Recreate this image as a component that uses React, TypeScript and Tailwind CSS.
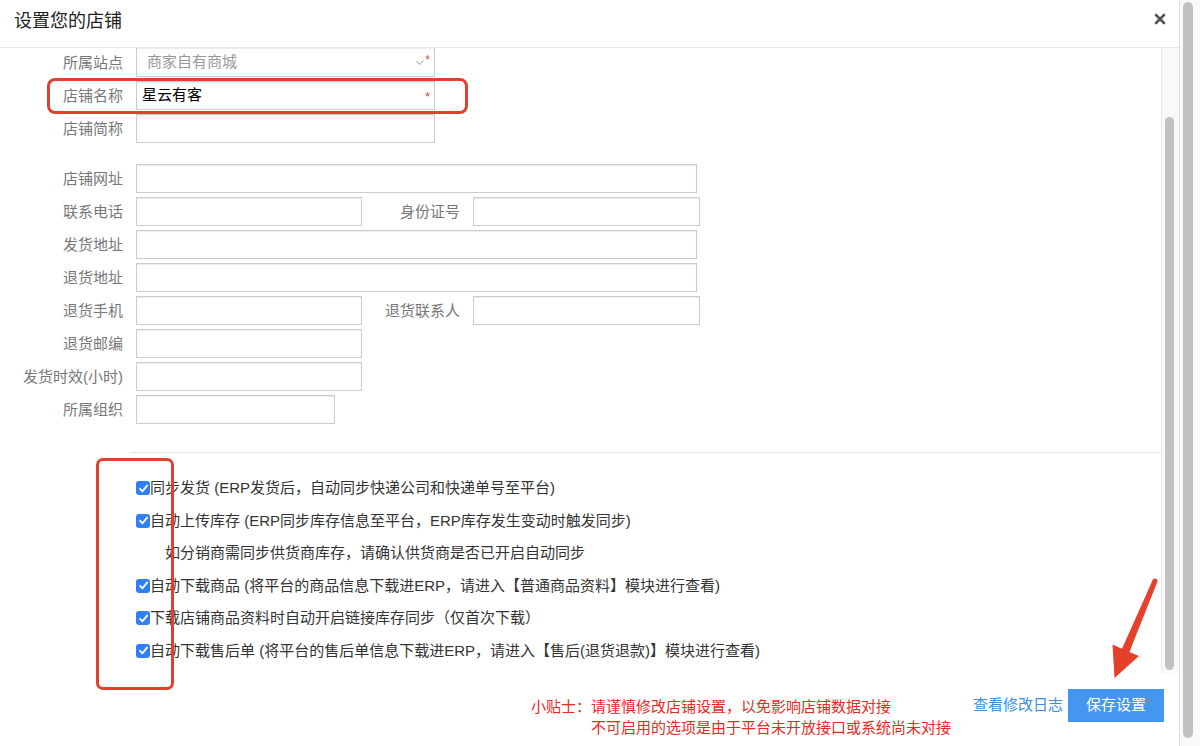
import { ReactNode } from 'react';

const Label = ({ children, w = 'w-[123px]' }: { children: ReactNode; w?: string }) => (
    <div className={`${w} shrink-0 text-right text-[15px] text-[#777] leading-none`}>{children}</div>
);

const Field = ({ w, children }: { w: string; children?: ReactNode }) => (
    <div
        className={`${w} ml-[13px] h-full border border-[#ccc] shadow-[inset_0_1px_1px_rgba(0,0,0,0.08)] flex items-center relative`}
    >
        {children}
    </div>
);

const Row = ({ children, className = '' }: { children: ReactNode; className?: string }) => (
    <div className={`flex items-center h-[29px] ${className}`}>{children}</div>
);

const Check = ({ children }: { children: ReactNode }) => (
    <div className="flex items-center h-[32.5px] pl-[136px] text-[15px] text-[#333]">
        <span className="w-[14px] h-[14px] rounded-[3px] bg-[#2f80f7] flex items-center justify-center shrink-0">
            <svg width="11" height="11" viewBox="0 0 12 12">
                <path d="M2.2 6.3 L4.9 9 L9.9 2.8" fill="none" stroke="#fff" strokeWidth="2" strokeLinecap="round" strokeLinejoin="round" />
            </svg>
        </span>
        <span>{children}</span>
    </div>
);

export default function App() {
    return (
        <div className="relative w-[1200px] h-[746px] overflow-hidden bg-white flex font-['Liberation_Sans','Noto_Sans_CJK_SC',sans-serif]">
            {/* modal */}
            <div className="w-[1179px] h-full flex flex-col">
                <div className="h-[48px] shrink-0 border-b border-[#e6e6e6] flex items-start justify-between pl-[14px] pr-[13px] pt-[9px]">
                    <h1 className="text-[18px] leading-[24px] text-[#222]">设置您的店铺</h1>
                    <svg width="12" height="12" viewBox="0 0 12 12" className="mt-[4px]">
                        <path d="M2 2 L10 10 M10 2 L2 10" stroke="#555" strokeWidth="2.6" strokeLinecap="round" />
                    </svg>
                </div>

                <div className="h-[625px] shrink-0 flex">
                    <div className="flex-1 overflow-hidden">
                        <div className="flex flex-col">
                            <Row className="h-[28px]">
                                <Label>所属站点</Label>
                                <Field w="w-[299px] border-t-0">
                                    <span className="pl-[10px] text-[15px] text-[#999]">商家自有商城</span>
                                    <svg width="8" height="6" viewBox="0 0 8 6" className="absolute right-[10px] top-[12px]">
                                        <path d="M0.5 1 L3.5 4.5 L7.5 0.5" fill="none" stroke="#999" strokeWidth="1" />
                                    </svg>
                                    <span className="absolute right-[4px] top-[6px] text-[12px] leading-none text-[#e04a4a]">*</span>
                                </Field>
                            </Row>
                            <Row className="mt-[4px]">
                                <Label>店铺名称</Label>
                                <Field w="w-[299px]">
                                    <span className="pl-[5px] text-[15px] text-black">星云有客</span>
                                    <span className="absolute right-[4px] top-[8px] text-[13px] leading-none text-[#e04a4a]">*</span>
                                </Field>
                            </Row>
                            <Row className="mt-[4px]">
                                <Label>店铺简称</Label>
                                <Field w="w-[299px]" />
                            </Row>

                            <Row className="mt-[21px]">
                                <Label>店铺网址</Label>
                                <Field w="w-[561px]" />
                            </Row>
                            <Row className="mt-[4px]">
                                <Label>联系电话</Label>
                                <Field w="w-[226px]" />
                                <Label w="w-[98px]">身份证号</Label>
                                <Field w="w-[227px]" />
                            </Row>
                            <Row className="mt-[4px]">
                                <Label>发货地址</Label>
                                <Field w="w-[561px]" />
                            </Row>
                            <Row className="mt-[4px]">
                                <Label>退货地址</Label>
                                <Field w="w-[561px]" />
                            </Row>
                            <Row className="mt-[4px]">
                                <Label>退货手机</Label>
                                <Field w="w-[226px]" />
                                <Label w="w-[98px]">退货联系人</Label>
                                <Field w="w-[227px]" />
                            </Row>
                            <Row className="mt-[4px]">
                                <Label>退货邮编</Label>
                                <Field w="w-[226px]" />
                            </Row>
                            <Row className="mt-[4px]">
                                <Label>发货时效(小时)</Label>
                                <Field w="w-[226px]" />
                            </Row>
                            <Row className="mt-[4px]">
                                <Label>所属组织</Label>
                                <Field w="w-[199px]" />
                            </Row>

                            <div className="mt-[28px] ml-[130px] border-t border-[#e6e6e6]" />

                            <div className="pt-[19px] flex flex-col">
                                <Check>同步发货 (ERP发货后，自动同步快递公司和快递单号至平台)</Check>
                                <Check>自动上传库存 (ERP同步库存信息至平台，ERP库存发生变动时触发同步)</Check>
                                <div className="flex items-center h-[32.5px] pl-[165px] text-[15px] text-[#333]">
                                    如分销商需同步供货商库存，请确认供货商是否已开启自动同步
                                </div>
                                <Check>自动下载商品 (将平台的商品信息下载进ERP，请进入【普通商品资料】模块进行查看)</Check>
                                <Check>下载店铺商品资料时自动开启链接库存同步（仅首次下载）</Check>
                                <Check>自动下载售后单 (将平台的售后单信息下载进ERP，请进入【售后(退货退款)】模块进行查看)</Check>
                            </div>
                        </div>
                    </div>
                    {/* inner scrollbar */}
                    <div className="w-[18px] shrink-0 border-l border-[#e8e8e8] bg-[#f9f9f9] pl-[3px] pt-[69px] pb-[3px]">
                        <div className="w-[9px] h-full rounded-full bg-[#c1c1c1]" />
                    </div>
                </div>

                <div className="flex-1 flex justify-end items-start pt-[16px] pr-[15px]">
                    <div className="mt-[7px] text-[15px] leading-[21px] text-[#e62b1e]">
                        <div>小贴士：请谨慎修改店铺设置，以免影响店铺数据对接</div>
                        <div className="pl-[60px]">不可启用的选项是由于平台未开放接口或系统尚未对接</div>
                    </div>
                    <a className="ml-[22px] h-[33px] flex items-center text-[15px] text-[#3a8fe2]">查看修改日志</a>
                    <button className="ml-[5px] w-[96px] h-[33px] bg-[#4596f0] text-white text-[15px]">保存设置</button>
                </div>
            </div>

            {/* outer scrollbar */}
            <div className="w-[21px] h-full border-l border-[#ddd] bg-[#fafafa] pl-[3px] pt-[2px] pb-[8px]">
                <div className="w-[10px] h-full rounded-full bg-[#c1c1c1]" />
            </div>

            {/* annotations */}
            <div className="absolute left-[47px] top-[78px] w-[421px] h-[36px] border-[3px] border-[#e0402c] rounded-[8px] pointer-events-none" />
            <div className="absolute left-[96px] top-[458px] w-[78px] h-[232px] border-[3px] border-[#e0402c] rounded-[7px] pointer-events-none" />
            <svg className="absolute left-[1100px] top-[570px] pointer-events-none" width="70" height="120" viewBox="0 0 70 120">
                <polygon points="52.7,10 57.3,12 29.4,81.9 39,86 14.5,108 12.5,74.5 22,78.7" fill="#e5402a" />
                <circle cx="55" cy="11" r="2.5" fill="#e5402a" />
            </svg>
        </div>
    );
}
